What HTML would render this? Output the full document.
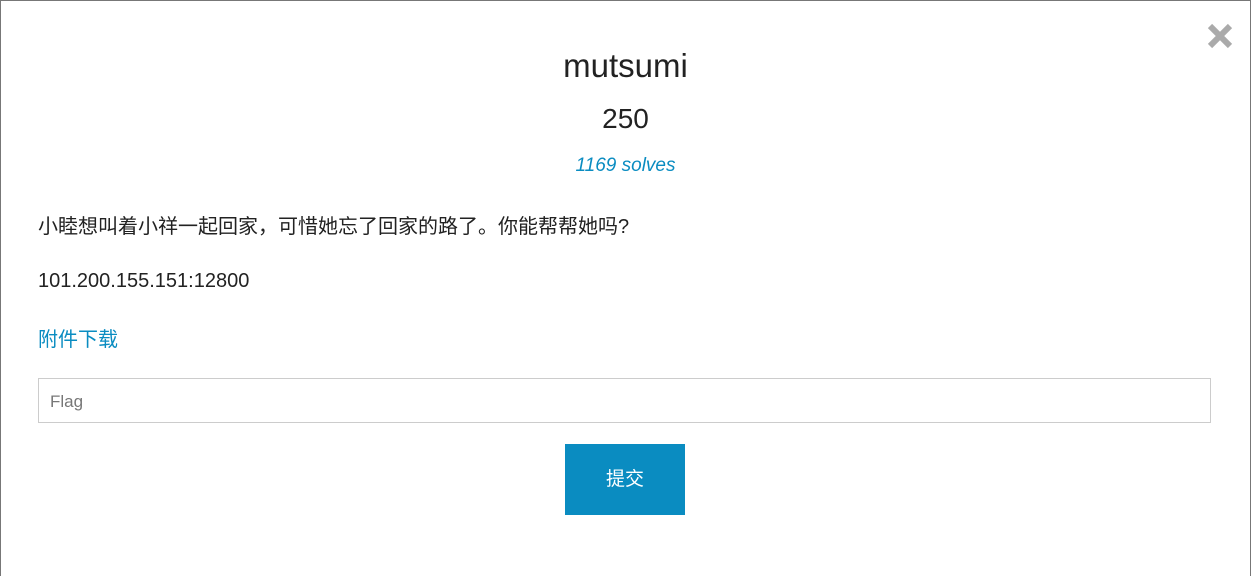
<!DOCTYPE html>
<html><head><meta charset="utf-8"><style>
html,body{margin:0;padding:0;width:1252px;height:576px;overflow:hidden;background:#fff;font-family:"Liberation Sans","Noto Sans CJK SC",sans-serif;color:#222;}
.m{position:absolute;left:0;top:0;width:1249px;height:575px;border:1px solid #777;border-bottom:none;background:#fff;}
.t{position:absolute;left:0;width:1251px;text-align:center;}
.x{position:absolute;left:1206px;top:22px;width:28px;height:28px;}
.p{position:absolute;left:38px;font-size:20px;}
.in{position:absolute;left:38px;top:378px;width:1171px;height:43px;border:1px solid #ccc;box-sizing:content-box;}
.in span{position:absolute;left:11px;top:13px;font-size:17px;color:#777;}
.b{position:absolute;left:565px;top:444px;width:120px;height:71px;background:#0a8cc1;color:#fff;font-size:19px;text-align:center;line-height:71px;}
</style></head><body>
<div class="m"></div>
<svg class="x" viewBox="0 0 28 28"><path d="M4 4L24 24M24 4L4 24" stroke="#aaa" stroke-width="6"/></svg>
<div class="t" style="top:47px;font-size:33px;">mutsumi</div>
<div class="t" style="top:103px;font-size:28px;">250</div>
<div class="t" style="top:155px;font-size:19px;font-style:italic;color:#0a8cc1;">1169 solves</div>
<div class="p" style="top:210px;">小睦想叫着小祥一起回家，可惜她忘了回家的路了。你能帮帮她吗?</div>
<div class="p" style="top:270px;">101.200.155.151:12800</div>
<div class="p" style="top:323px;color:#0a8cc1;">附件下载</div>
<div class="in"><span>Flag</span></div>
<div class="b">提交</div>
</body></html>
